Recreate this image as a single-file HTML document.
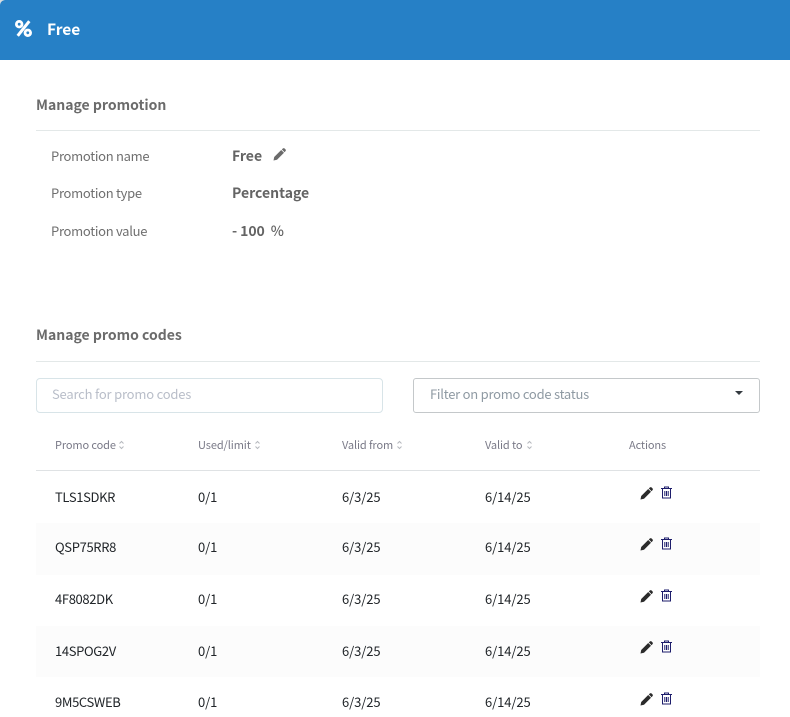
<!DOCTYPE html>
<html><head><meta charset="utf-8">
<style>
html,body{margin:0;padding:0;background:#fff}
#p{position:relative;width:790px;height:717px;overflow:hidden;background:#fff;font-family:"Noto Sans CJK SC","Liberation Sans",sans-serif}
.t{position:absolute;white-space:pre;line-height:20px;height:20px}
.l{position:absolute;height:1px}
.h{font-size:14px;font-weight:700;color:#6b6b6b}
.k{font-size:13px;letter-spacing:-.29px;color:#6f6f6f;left:51px}
.v{font-size:14px;font-weight:700;color:#646464;left:232px}
.th{font-size:11px;letter-spacing:-.12px;color:#7a7a88}
.td{font-size:13px;letter-spacing:-.1px;color:#212529}
.c{letter-spacing:-.35px}
.g{position:absolute;left:36px;width:724px;height:52px;background:#fcfcfc}
svg{position:absolute;display:block}
</style></head><body>
<div id="p">
<div style="position:absolute;left:0;top:0;width:790px;height:60px;background:#2680c6"></div>
<svg style="left:0;top:0" width="6" height="6" viewBox="0 0 6 6"><path d="M0 0H5C2 .5 .5 2 0 5Z" fill="#d8dde0"/></svg>
<svg style="left:15px;top:20px" width="17" height="17" viewBox="0 0 17 17"><circle cx="4.200" cy="4.200" r="2.800" fill="none" stroke="#fff" stroke-width="2.800"/><circle cx="12.800" cy="12.800" r="2.800" fill="none" stroke="#fff" stroke-width="2.800"/><path d="M14.300 1.200L2.700 15.800" stroke="#fff" stroke-width="3"/></svg>
<div class="t" style="left:47px;top:19px;font-size:15.500px;font-weight:700;color:#fff">Free</div>

<div class="t h" style="left:36px;top:95px">Manage promotion</div>
<div class="l" style="left:36px;top:130px;width:724px;background:#e3e8e8"></div>
<div class="t k" style="top:146px">Promotion name</div>
<div class="t k" style="top:183px">Promotion type</div>
<div class="t k" style="top:221px">Promotion value</div>
<div class="t v" style="top:146px">Free</div>
<svg style="left:273px;top:148px" width="13" height="13" viewBox="0 0 13 13"><path d="M0.500 12.500L1.200 9L8.200 2L11 4.800L4 11.800Z M8.800 1.400L10 .4C10.500 0 11 0 11.500 .4L12.600 1.500C13 2 13 2.500 12.600 3L11.600 4.200Z" fill="#6b6b6b"/></svg>
<div class="t v" style="top:183px">Percentage</div>
<div class="t v" style="top:221px;letter-spacing:-.1px">- 100<span style="font-weight:500">  %</span></div>

<div class="t h" style="left:36px;top:325px">Manage promo codes</div>
<div class="l" style="left:36px;top:361px;width:724px;background:#e3e8e8"></div>
<div style="position:absolute;left:36px;top:378px;width:345px;height:33px;border:1px solid #d8e4e8;border-radius:4px"></div>
<div class="t" style="left:52px;top:384px;font-size:13px;letter-spacing:-.2px;color:#b9bec9">Search for promo codes</div>
<div style="position:absolute;left:413px;top:378px;width:345px;height:33px;border:1px solid #c4c8ca;border-radius:3px"></div>
<div class="t" style="left:430px;top:384px;font-size:13px;letter-spacing:-.24px;color:#8f9aa3">Filter on promo code status</div>
<svg style="left:735px;top:391px" width="8" height="4" viewBox="0 0 8 4"><path d="M0 0H8L4 4Z" fill="#343a40"/></svg>

<div class="t th" style="left:55px;top:435px">Promo code</div>
<div class="t th" style="left:198px;top:435px;letter-spacing:-.1px">Used/limit</div>
<div class="t th" style="left:342px;top:435px">Valid from</div>
<div class="t th" style="left:485px;top:435px">Valid to</div>
<div class="t th" style="left:629px;top:435px">Actions</div>
<svg style="left:118px;top:440px" width="7" height="10" viewBox="0 0 7 10"><path d="M1.500 3.500L3.500 1.500L5.500 3.500M1.500 6.500L3.500 8.500L5.500 6.500" fill="none" stroke="#b5b8bd" stroke-width="1"/></svg>
<svg style="left:254px;top:440px" width="7" height="10" viewBox="0 0 7 10"><path d="M1.500 3.500L3.500 1.500L5.500 3.500M1.500 6.500L3.500 8.500L5.500 6.500" fill="none" stroke="#b5b8bd" stroke-width="1"/></svg>
<svg style="left:396px;top:440px" width="7" height="10" viewBox="0 0 7 10"><path d="M1.500 3.500L3.500 1.500L5.500 3.500M1.500 6.500L3.500 8.500L5.500 6.500" fill="none" stroke="#b5b8bd" stroke-width="1"/></svg>
<svg style="left:526px;top:440px" width="7" height="10" viewBox="0 0 7 10"><path d="M1.500 3.500L3.500 1.500L5.500 3.500M1.500 6.500L3.500 8.500L5.500 6.500" fill="none" stroke="#b5b8bd" stroke-width="1"/></svg>
<div class="l" style="left:36px;top:470px;width:724px;background:#dfe2e4"></div>

<div class="g" style="top:523px"></div>
<div class="g" style="top:626px;height:51px"></div>

<div class="t td c" style="left:55px;top:487px">TLS1SDKR</div><div class="t td" style="left:198px;top:487px">0/1</div><div class="t td" style="left:342px;top:487px">6/3/25</div><div class="t td" style="left:485px;top:487px">6/14/25</div>
<div class="t td c" style="left:55px;top:537px">QSP75RR8</div><div class="t td" style="left:198px;top:537px">0/1</div><div class="t td" style="left:342px;top:537px">6/3/25</div><div class="t td" style="left:485px;top:537px">6/14/25</div>
<div class="t td c" style="left:55px;top:589px">4F8082DK</div><div class="t td" style="left:198px;top:589px">0/1</div><div class="t td" style="left:342px;top:589px">6/3/25</div><div class="t td" style="left:485px;top:589px">6/14/25</div>
<div class="t td c" style="left:55px;top:641px">14SPOG2V</div><div class="t td" style="left:198px;top:641px">0/1</div><div class="t td" style="left:342px;top:641px">6/3/25</div><div class="t td" style="left:485px;top:641px">6/14/25</div>
<div class="t td c" style="left:55px;top:692px">9M5CSWEB</div><div class="t td" style="left:198px;top:692px">0/1</div><div class="t td" style="left:342px;top:692px">6/3/25</div><div class="t td" style="left:485px;top:692px">6/14/25</div>

<svg style="left:640px;top:487px" width="13" height="13" viewBox="0 0 13 13"><path d="M0.500 12.500L1.200 9L8.200 2L11 4.800L4 11.800Z M8.800 1.400L10 .4C10.500 0 11 0 11.500 .4L12.600 1.500C13 2 13 2.500 12.600 3L11.600 4.200Z" fill="#2b2b2b"/></svg>
<svg style="left:661px;top:486px" width="11" height="13" viewBox="0 0 11 13"><path d="M0 2.500H11M3.500 2.500V1H7.500V2.500M1.500 2.500V12H9.500V2.500M3.800 5V10M5.500 5V10M7.200 5V10" fill="none" stroke="#1d1d6b" stroke-width="1"/></svg>
<svg style="left:640px;top:538px" width="13" height="13" viewBox="0 0 13 13"><path d="M0.500 12.500L1.200 9L8.200 2L11 4.800L4 11.800Z M8.800 1.400L10 .4C10.500 0 11 0 11.500 .4L12.600 1.500C13 2 13 2.500 12.600 3L11.600 4.200Z" fill="#2b2b2b"/></svg>
<svg style="left:661px;top:537px" width="11" height="13" viewBox="0 0 11 13"><path d="M0 2.500H11M3.500 2.500V1H7.500V2.500M1.500 2.500V12H9.500V2.500M3.800 5V10M5.500 5V10M7.200 5V10" fill="none" stroke="#1d1d6b" stroke-width="1"/></svg>
<svg style="left:640px;top:590px" width="13" height="13" viewBox="0 0 13 13"><path d="M0.500 12.500L1.200 9L8.200 2L11 4.800L4 11.800Z M8.800 1.400L10 .4C10.500 0 11 0 11.500 .4L12.600 1.500C13 2 13 2.500 12.600 3L11.600 4.200Z" fill="#2b2b2b"/></svg>
<svg style="left:661px;top:589px" width="11" height="13" viewBox="0 0 11 13"><path d="M0 2.500H11M3.500 2.500V1H7.500V2.500M1.500 2.500V12H9.500V2.500M3.800 5V10M5.500 5V10M7.200 5V10" fill="none" stroke="#1d1d6b" stroke-width="1"/></svg>
<svg style="left:640px;top:641px" width="13" height="13" viewBox="0 0 13 13"><path d="M0.500 12.500L1.200 9L8.200 2L11 4.800L4 11.800Z M8.800 1.400L10 .4C10.500 0 11 0 11.500 .4L12.600 1.500C13 2 13 2.500 12.600 3L11.600 4.200Z" fill="#2b2b2b"/></svg>
<svg style="left:661px;top:640px" width="11" height="13" viewBox="0 0 11 13"><path d="M0 2.500H11M3.500 2.500V1H7.500V2.500M1.500 2.500V12H9.500V2.500M3.800 5V10M5.500 5V10M7.200 5V10" fill="none" stroke="#1d1d6b" stroke-width="1"/></svg>
<svg style="left:640px;top:693px" width="13" height="13" viewBox="0 0 13 13"><path d="M0.500 12.500L1.200 9L8.200 2L11 4.800L4 11.800Z M8.800 1.400L10 .4C10.500 0 11 0 11.500 .4L12.600 1.500C13 2 13 2.500 12.600 3L11.600 4.200Z" fill="#2b2b2b"/></svg>
<svg style="left:661px;top:692px" width="11" height="13" viewBox="0 0 11 13"><path d="M0 2.500H11M3.500 2.500V1H7.500V2.500M1.500 2.500V12H9.500V2.500M3.800 5V10M5.500 5V10M7.200 5V10" fill="none" stroke="#1d1d6b" stroke-width="1"/></svg>
</div>
</body></html>
